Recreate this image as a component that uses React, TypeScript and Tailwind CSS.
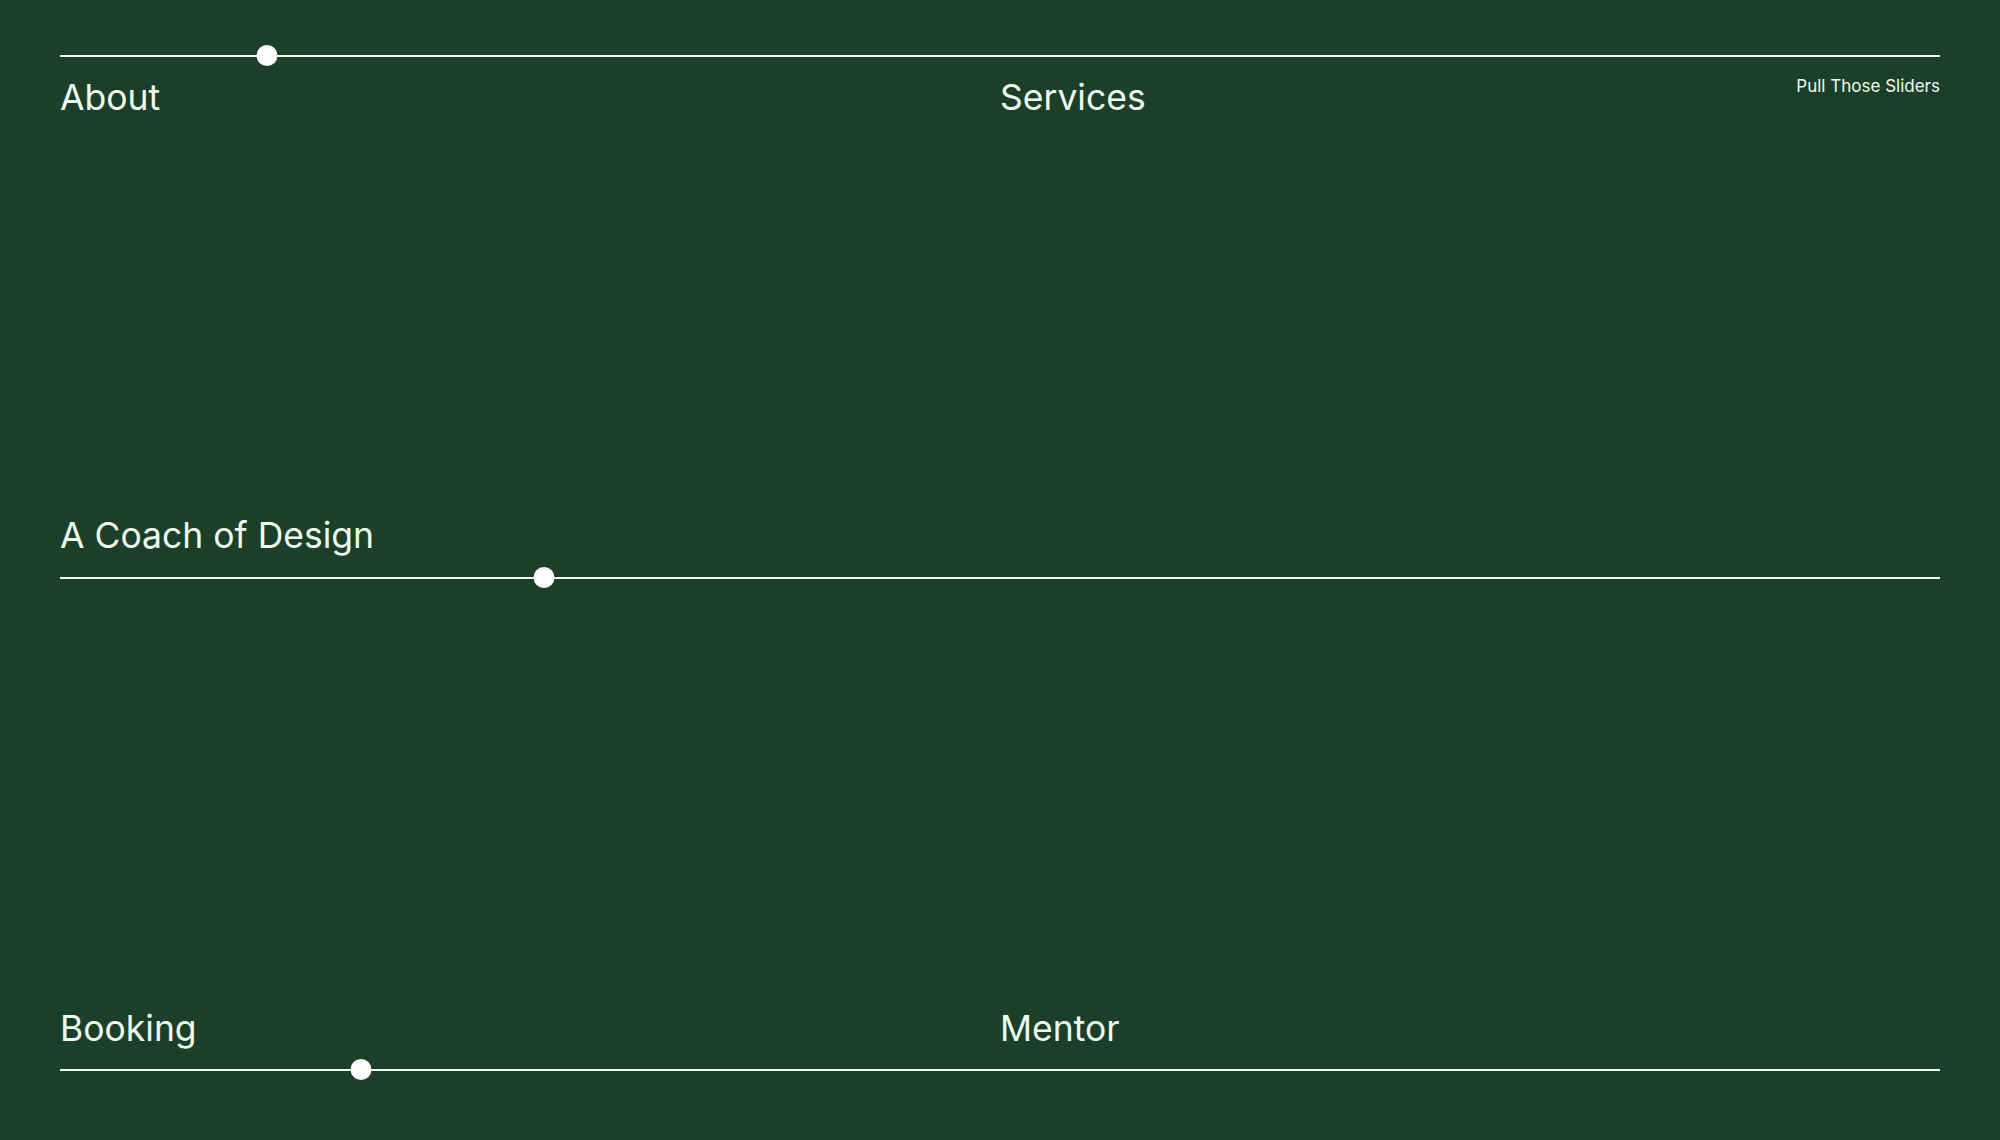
import React from "react";

function Slider({ pos }: { pos: number }) {
  return (
    <div className="relative h-[22px] w-full">
      <div className="absolute left-0 right-0 top-[10px] h-[1.5px] bg-[#f2fbf3]" />
      <div
        className="absolute top-0 h-[21px] w-[21px] -translate-x-1/2 rounded-full bg-white"
        style={{ left: `${pos}px` }}
      />
    </div>
  );
}

export default function App() {
  const font = { fontFamily: 'Inter, "Liberation Sans", Arial, sans-serif' };
  return (
    <div
      className="flex h-[1140px] w-full flex-col bg-[#1c3f2a] px-[60px] text-[#eefaf0]"
      style={font}
    >
      <div className="pt-[45px]">
        <Slider pos={207} />
        <div className="mt-[9px] grid grid-cols-2">
          <h2 className="text-[35.5px] leading-[44px] font-normal">About</h2>
          <div className="flex items-start justify-between">
            <h2 className="text-[35.5px] leading-[44px] font-normal">Services</h2>
            <span className="-mt-[2px] text-[17px] leading-[24px]">Pull Those Sliders</span>
          </div>
        </div>
      </div>

      <div className="mt-[394px]">
        <h2 className="text-[35.5px] leading-[44px] font-normal">A Coach of Design</h2>
        <div className="mt-[9px]">
          <Slider pos={484} />
        </div>
      </div>

      <div className="mt-[418px]">
        <div className="grid grid-cols-2">
          <h2 className="text-[35.5px] leading-[44px] font-normal">Booking</h2>
          <h2 className="text-[35.5px] leading-[44px] font-normal">Mentor</h2>
        </div>
        <div className="mt-[8px]">
          <Slider pos={301} />
        </div>
      </div>
    </div>
  );
}
